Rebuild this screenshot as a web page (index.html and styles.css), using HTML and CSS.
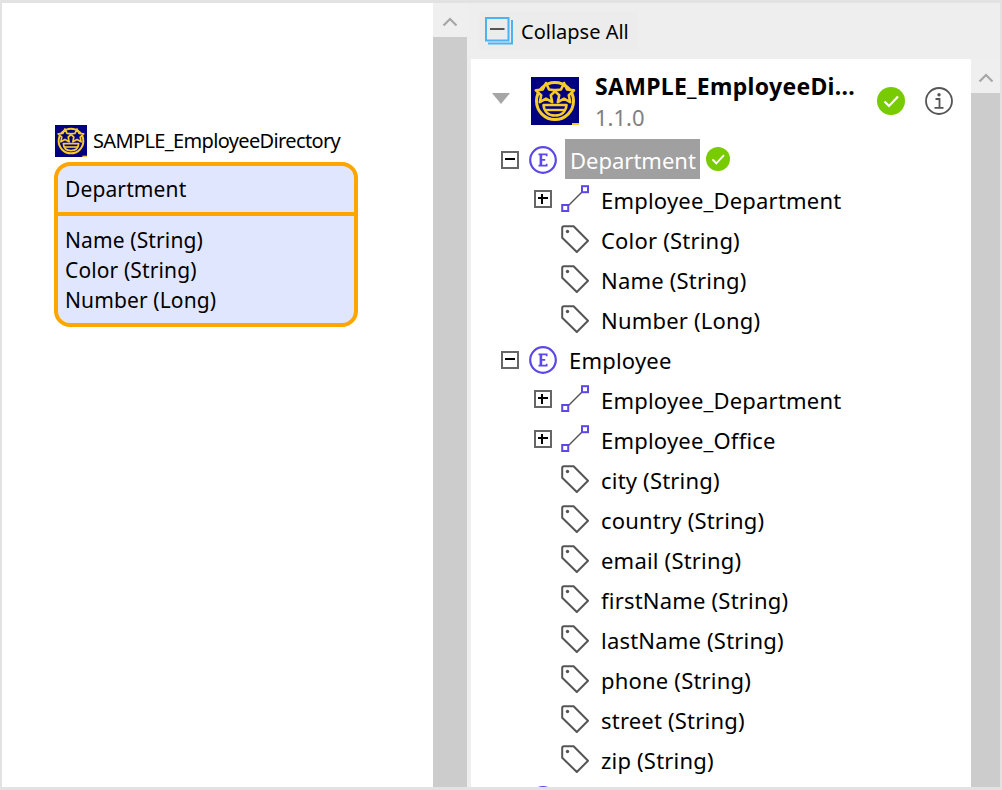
FILE: index.html
```html
<!DOCTYPE html>
<html lang="en">
<head>
<meta charset="utf-8">
<title>Employee Directory</title>
<link rel="stylesheet" href="styles.css">
</head>
<body>
<svg class="defs" width="0" height="0" aria-hidden="true">
  <symbol id="logo" viewBox="0 0 48 48">
    <rect width="48" height="48" fill="#000080"/>
    <circle cx="24" cy="24" r="18.500" fill="none" stroke="#f7ca2d" stroke-width="3"/>
    <path d="M15 6l3 6.500 7 .9-5.200 4.800 1.400 7-6.200-3.500-6.200 3.500 1.400-7L4.800 13.400l7-.9z" fill="#000080" stroke="#f7ca2d" stroke-width="2.600" stroke-linejoin="round"/>
    <path d="M33 6l3 6.500 7 .9-5.200 4.800 1.400 7-6.200-3.500-6.200 3.500 1.400-7-5.200-4.800 7-.9z" fill="#000080" stroke="#f7ca2d" stroke-width="2.600" stroke-linejoin="round"/>
    <path d="M12.500 28h23c-.5 6.500-5 10.500-11.500 10.500S13 34.500 12.500 28z" fill="none" stroke="#f7ca2d" stroke-width="2.600" stroke-linejoin="round"/>
    <path d="M14 33h20" stroke="#f7ca2d" stroke-width="2.400"/>
    <rect x="41" y="46" width="7" height="2" fill="#f7ca2d"/>
  </symbol>
  <symbol id="entity" viewBox="0 0 28 28">
    <circle cx="14" cy="14" r="12.800" fill="none" stroke="#5b48e6" stroke-width="2.200"/>
    <path d="M9.500 7.500h9v2.800h-1.600V9.300h-3.700v3.700h3v1.800h-3v3.900h3.700v-1h1.600v2.800h-9v-1.700h1.100V9.200H9.500z" fill="#5b48e6"/>
  </symbol>
  <symbol id="assoc" viewBox="0 0 28 28">
    <path d="M6 22L23 5" stroke="#555" stroke-width="1.500"/>
    <rect x="1.200" y="20" width="6" height="6" fill="#fff" stroke="#5b48e6" stroke-width="2"/>
    <rect x="21" y="1.200" width="6" height="6" fill="#fff" stroke="#5b48e6" stroke-width="2"/>
  </symbol>
  <symbol id="tag" viewBox="0 0 28 28">
    <path d="M1.200 3a1.800 1.800 0 0 1 1.800-1.800h9.600L27 15.800 15.800 27 1.200 12.700z" fill="none" stroke="#555" stroke-width="2" stroke-linejoin="round"/>
    <circle cx="6.500" cy="6.500" r="1.700" fill="#555"/>
  </symbol>
  <symbol id="check" viewBox="0 0 28 28">
    <circle cx="14" cy="14" r="14" fill="#78cb00"/>
    <path d="M7.500 14.500l4.500 4.500 9-9.500" fill="none" stroke="#fff" stroke-width="2.200"/>
  </symbol>
  <symbol id="up" viewBox="0 0 16 10">
    <path d="M1.500 8.500L8 2l6.500 6.500" fill="none" stroke="#a6a6a6" stroke-width="2.200"/>
  </symbol>
</svg>

<main class="app">
  <section class="canvas">
    <div class="module-name">
      <svg class="module-logo"><use href="#logo"/></svg>
      <span class="module-name-text">SAMPLE_EmployeeDirectory</span>
    </div>
    <div class="node">
      <div class="node-title">Department</div>
      <div class="node-attrs">
        <div>Name (String)</div>
        <div>Color (String)</div>
        <div>Number (Long)</div>
      </div>
    </div>
  </section>

  <div class="scrollbar scrollbar-left">
    <div class="scroll-btn scroll-btn-left"><svg class="chevron"><use href="#up"/></svg></div>
  </div>

  <section class="explorer">
    <div class="toolbar">
      <button class="collapse-btn" type="button">
        <svg class="collapse-icon" viewBox="0 0 28 28">
          <path d="M3 26.500h24V3" fill="none" stroke="#4db2ef" stroke-width="2"/>
          <rect x="1" y="1" width="22.500" height="22.500" fill="none" stroke="#4db2ef" stroke-width="2"/>
          <path d="M5 12h14.500" stroke="#555" stroke-width="2"/>
        </svg>
        <span>Collapse All</span>
      </button>
    </div>
    <div class="panel">
      <div class="tree">
        <header class="module">
          <span class="triangle"></span>
          <svg class="header-logo"><use href="#logo"/></svg>
          <div class="module-text">
            <div class="module-title">SAMPLE_EmployeeDi...</div>
            <div class="module-version">1.1.0</div>
          </div>
          <svg class="status"><use href="#check"/></svg>
          <svg class="info" viewBox="0 0 28 28">
            <circle cx="14" cy="14" r="13" fill="none" stroke="#555" stroke-width="1.800"/>
            <circle cx="14" cy="7.800" r="1.700" fill="#555"/>
            <path d="M10.500 12h4v8.500M9.500 20.800h9" fill="none" stroke="#555" stroke-width="1.800"/>
          </svg>
        </header>

        <div class="row entity">
          <span class="box minus"></span>
          <svg class="icon"><use href="#entity"/></svg>
          <span class="label selected">Department</span>
          <svg class="mini-check"><use href="#check"/></svg>
        </div>
        <div class="row child"><span class="box plus"></span><svg class="icon"><use href="#assoc"/></svg><span class="text">Employee_Department</span></div>
        <div class="row child"><span class="slot"></span><svg class="icon"><use href="#tag"/></svg><span class="text">Color (String)</span></div>
        <div class="row child"><span class="slot"></span><svg class="icon"><use href="#tag"/></svg><span class="text">Name (String)</span></div>
        <div class="row child"><span class="slot"></span><svg class="icon"><use href="#tag"/></svg><span class="text">Number (Long)</span></div>

        <div class="row entity">
          <span class="box minus"></span>
          <svg class="icon"><use href="#entity"/></svg>
          <span class="label">Employee</span>
        </div>
        <div class="row child"><span class="box plus"></span><svg class="icon"><use href="#assoc"/></svg><span class="text">Employee_Department</span></div>
        <div class="row child"><span class="box plus"></span><svg class="icon"><use href="#assoc"/></svg><span class="text">Employee_Office</span></div>
        <div class="row child"><span class="slot"></span><svg class="icon"><use href="#tag"/></svg><span class="text">city (String)</span></div>
        <div class="row child"><span class="slot"></span><svg class="icon"><use href="#tag"/></svg><span class="text">country (String)</span></div>
        <div class="row child"><span class="slot"></span><svg class="icon"><use href="#tag"/></svg><span class="text">email (String)</span></div>
        <div class="row child"><span class="slot"></span><svg class="icon"><use href="#tag"/></svg><span class="text">firstName (String)</span></div>
        <div class="row child"><span class="slot"></span><svg class="icon"><use href="#tag"/></svg><span class="text">lastName (String)</span></div>
        <div class="row child"><span class="slot"></span><svg class="icon"><use href="#tag"/></svg><span class="text">phone (String)</span></div>
        <div class="row child"><span class="slot"></span><svg class="icon"><use href="#tag"/></svg><span class="text">street (String)</span></div>
        <div class="row child"><span class="slot"></span><svg class="icon"><use href="#tag"/></svg><span class="text">zip (String)</span></div>

        <div class="row entity">
          <span class="slot"></span>
          <svg class="icon"><use href="#entity"/></svg>
        </div>
      </div>
      <div class="scrollbar scrollbar-right">
        <div class="scroll-btn scroll-btn-right"><svg class="chevron"><use href="#up"/></svg></div>
      </div>
    </div>
  </section>
</main>
</body>
</html>
```

FILE: styles.css
```css
* { box-sizing: border-box; }

html, body { height: 100%; }

body {
  margin: 0;
  overflow: hidden;
  font-family: "Noto Sans", "Open Sans", sans-serif;
  color: #000;
  background: #fff;
}

.defs { position: absolute; }

.app {
  display: flex;
  width: 1002px;
  height: 790px;
  border-style: solid;
  border-color: #e2e2e2;
  border-width: 3px 2px 3px 2px;
  background: #fff;
}

.canvas {
  flex: 0 0 431px;
  padding: 122px 0 0 52px;
}

.module-name {
  display: flex;
  align-items: center;
  gap: 6px;
  height: 32px;
  padding-left: 1px;
  font-size: 20px;
  letter-spacing: -0.64px;
}

.module-name-text { margin-top: -2px; }

.module-logo { width: 32px; height: 32px; }

.node {
  width: 304px;
  margin-top: 5px;
  border: 4px solid #ffa500;
  border-radius: 16px;
  background: #e1e6ff;
  font-size: 21px;
  letter-spacing: 0.12px;
}

.node-title {
  height: 50px;
  padding: 0 7px;
  line-height: 46px;
  border-bottom: 4px solid #ffa500;
}

.node-attrs {
  padding: 9px 7px 8px;
  line-height: 30px;
}

.scrollbar {
  background: #cccccc;
  flex: none;
}

.scrollbar-left { width: 34px; }

.scrollbar-right { width: 29px; }

.scroll-btn {
  display: flex;
  align-items: center;
  justify-content: center;
  height: 34px;
  padding-top: 4px;
  background: #efefef;
}

.chevron { width: 16px; height: 10px; }

.explorer {
  flex: 1;
  min-width: 0;
  display: flex;
  flex-direction: column;
  background: #eeeeee;
}

.toolbar {
  flex: 0 0 56px;
  padding: 9px 0 0 12px;
}

.collapse-btn {
  display: flex;
  align-items: center;
  gap: 8px;
  width: 159px;
  height: 38px;
  padding: 0 0 0 6px;
  border: 0;
  background: #ececec;
  font: inherit;
  font-size: 20px;
  color: #000;
}

.collapse-icon { width: 28px; height: 28px; flex: none; }

.panel {
  flex: 1;
  min-height: 0;
  display: flex;
  margin-left: 4px;
  overflow: hidden;
}

.tree {
  flex: 1;
  min-width: 0;
  background: #fff;
  overflow: hidden;
}

.module {
  display: flex;
  align-items: center;
  height: 82px;
  padding: 2px 0 0 21px;
}

.triangle {
  width: 0;
  height: 0;
  border-left: 9px solid transparent;
  border-right: 9px solid transparent;
  border-top: 11px solid #a6a6a6;
  margin-right: 21px;
  margin-top: -5px;
}

.header-logo { width: 48px; height: 48px; flex: none; }

.module-text {
  width: 282px;
  margin-left: 16px;
  margin-top: 2px;
}

.module-title {
  font-size: 23px;
  font-weight: 700;
  line-height: 28px;
  letter-spacing: 0.3px;
  white-space: nowrap;
}

.module-version {
  margin-top: 2px;
  font-size: 22px;
  line-height: 30px;
  color: #808080;
}

.status { width: 28px; height: 28px; flex: none; margin-top: -1px; }

.info { width: 28px; height: 28px; flex: none; margin-left: 20px; margin-top: -1px; }

.row {
  display: flex;
  align-items: center;
  height: 40px;
  font-size: 22px;
  letter-spacing: 0.2px;
  white-space: nowrap;
}

.entity { padding-left: 30px; }

.child { padding-left: 63px; }

.box, .slot {
  width: 18px;
  height: 18px;
  flex: none;
}

.box {
  position: relative;
  border: 2px solid #666;
  background: #fff;
  margin-top: -3px;
}

.child .box { margin-top: -4px; }

.box::before {
  content: "";
  position: absolute;
  left: 2px;
  right: 2px;
  top: 5px;
  height: 2px;
  background: #000;
}

.plus::after {
  content: "";
  position: absolute;
  top: 2px;
  bottom: 2px;
  left: 5px;
  width: 2px;
  background: #000;
}

.icon { width: 28px; height: 28px; flex: none; margin-left: 10px; margin-top: -3px; }

.child .icon { margin-left: 9px; margin-top: -5px; }

.label {
  margin-left: 8px;
  padding: 0 4px;
  height: 40px;
  line-height: 38px;
}

.selected {
  background: #a0a0a0;
  color: #fff;
  margin-top: -4px;
  padding: 0 4px 0 5px;
  line-height: 42px;
  letter-spacing: 0;
}

.mini-check { width: 24px; height: 24px; flex: none; margin-left: 6px; margin-top: -4px; }

.text { margin-left: 12px; margin-top: -2px; }
```
